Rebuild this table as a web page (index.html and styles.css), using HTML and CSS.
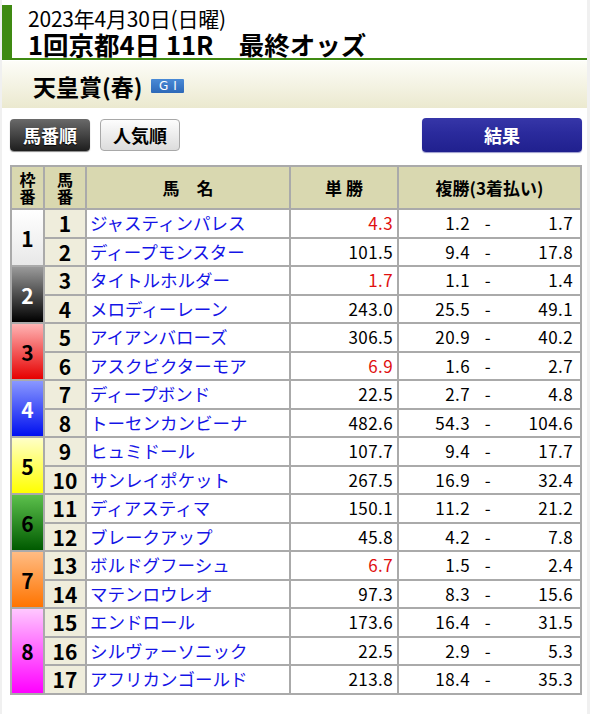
FILE: index.html
```html
<!DOCTYPE html>
<html lang="ja">
<head>
<meta charset="utf-8">
<title>最終オッズ</title>
<link rel="stylesheet" href="styles.css">
</head>
<body>
<div class="page">
  <div class="head">
    <div class="date">2023年4月30日(日曜)</div>
    <div class="race">1回京都4日 11R　最終オッズ</div>
  </div>
  <div class="band">
    <span class="rname">天皇賞(春)</span>
    <span class="grade">GI</span>
  </div>
  <div class="btns">
    <span class="btn dark">馬番順</span>
    <span class="btn light">人気順</span>
    <span class="btn blue">結果</span>
  </div>
  <table class="odds">
    <colgroup>
      <col style="width:33px"><col style="width:42px"><col style="width:204px"><col style="width:108px"><col style="width:183px">
    </colgroup>
    <thead>
      <tr><th class="hs">枠<br>番</th><th class="hs">馬<br>番</th><th>馬　名</th><th>単 勝</th><th>複勝(3着払い)</th></tr>
    </thead>
    <tbody>
      <tr><td rowspan="2" class="w w1">1</td><td class="no">1</td><td class="nm">ジャスティンパレス</td><td class="win red">4.3</td><td class="pl"><div class="plw"><span class="lo">1.2</span><span class="da">-</span><span class="hi">1.7</span></div></td></tr>
      <tr><td class="no">2</td><td class="nm">ディープモンスター</td><td class="win">101.5</td><td class="pl"><div class="plw"><span class="lo">9.4</span><span class="da">-</span><span class="hi">17.8</span></div></td></tr>
      <tr><td rowspan="2" class="w w2">2</td><td class="no">3</td><td class="nm">タイトルホルダー</td><td class="win red">1.7</td><td class="pl"><div class="plw"><span class="lo">1.1</span><span class="da">-</span><span class="hi">1.4</span></div></td></tr>
      <tr><td class="no">4</td><td class="nm">メロディーレーン</td><td class="win">243.0</td><td class="pl"><div class="plw"><span class="lo">25.5</span><span class="da">-</span><span class="hi">49.1</span></div></td></tr>
      <tr><td rowspan="2" class="w w3">3</td><td class="no">5</td><td class="nm">アイアンバローズ</td><td class="win">306.5</td><td class="pl"><div class="plw"><span class="lo">20.9</span><span class="da">-</span><span class="hi">40.2</span></div></td></tr>
      <tr><td class="no">6</td><td class="nm">アスクビクターモア</td><td class="win red">6.9</td><td class="pl"><div class="plw"><span class="lo">1.6</span><span class="da">-</span><span class="hi">2.7</span></div></td></tr>
      <tr><td rowspan="2" class="w w4">4</td><td class="no">7</td><td class="nm">ディープボンド</td><td class="win">22.5</td><td class="pl"><div class="plw"><span class="lo">2.7</span><span class="da">-</span><span class="hi">4.8</span></div></td></tr>
      <tr><td class="no">8</td><td class="nm">トーセンカンビーナ</td><td class="win">482.6</td><td class="pl"><div class="plw"><span class="lo">54.3</span><span class="da">-</span><span class="hi">104.6</span></div></td></tr>
      <tr><td rowspan="2" class="w w5">5</td><td class="no">9</td><td class="nm">ヒュミドール</td><td class="win">107.7</td><td class="pl"><div class="plw"><span class="lo">9.4</span><span class="da">-</span><span class="hi">17.7</span></div></td></tr>
      <tr><td class="no">10</td><td class="nm">サンレイポケット</td><td class="win">267.5</td><td class="pl"><div class="plw"><span class="lo">16.9</span><span class="da">-</span><span class="hi">32.4</span></div></td></tr>
      <tr><td rowspan="2" class="w w6">6</td><td class="no">11</td><td class="nm">ディアスティマ</td><td class="win">150.1</td><td class="pl"><div class="plw"><span class="lo">11.2</span><span class="da">-</span><span class="hi">21.2</span></div></td></tr>
      <tr><td class="no">12</td><td class="nm">ブレークアップ</td><td class="win">45.8</td><td class="pl"><div class="plw"><span class="lo">4.2</span><span class="da">-</span><span class="hi">7.8</span></div></td></tr>
      <tr><td rowspan="2" class="w w7">7</td><td class="no">13</td><td class="nm">ボルドグフーシュ</td><td class="win red">6.7</td><td class="pl"><div class="plw"><span class="lo">1.5</span><span class="da">-</span><span class="hi">2.4</span></div></td></tr>
      <tr><td class="no">14</td><td class="nm">マテンロウレオ</td><td class="win">97.3</td><td class="pl"><div class="plw"><span class="lo">8.3</span><span class="da">-</span><span class="hi">15.6</span></div></td></tr>
      <tr><td rowspan="3" class="w w8">8</td><td class="no">15</td><td class="nm">エンドロール</td><td class="win">173.6</td><td class="pl"><div class="plw"><span class="lo">16.4</span><span class="da">-</span><span class="hi">31.5</span></div></td></tr>
      <tr><td class="no">16</td><td class="nm">シルヴァーソニック</td><td class="win">22.5</td><td class="pl"><div class="plw"><span class="lo">2.9</span><span class="da">-</span><span class="hi">5.3</span></div></td></tr>
      <tr><td class="no">17</td><td class="nm">アフリカンゴールド</td><td class="win">213.8</td><td class="pl"><div class="plw"><span class="lo">18.4</span><span class="da">-</span><span class="hi">35.3</span></div></td></tr>
    </tbody>
  </table>
</div>
</body>
</html>
```
FILE: styles.css
```css
html, body {
  margin: 0;
  padding: 0;
  background: #f0f0f0;
}
body {
  font-family: "Noto Sans CJK JP", "Noto Sans", sans-serif;
  color: #000;
}
.page {
  margin-left: 2px;
  width: 585px;
  min-height: 714px;
  background: #fff;
  padding-top: 5px;
  box-sizing: border-box;
}
.head {
  border-left: 10px solid #3f8a12;
  border-bottom: 2px solid #3f8a12;
  padding-left: 16px;
  height: 53px;
  margin-bottom: 1px;
  box-sizing: content-box;
}
.date {
  font-size: 21px;
  line-height: 24px;
  padding-top: 1px;
  letter-spacing: -0.2px;
}
.race {
  font-size: 25.5px;
  font-weight: bold;
  line-height: 28px;
}
.band {
  height: 47px;
  background: linear-gradient(#fdfdf8, #ebe9cf);
  display: flex;
  align-items: center;
  padding-left: 31px;
  padding-top: 2px;
  box-sizing: border-box;
}
.rname {
  font-size: 23px;
  font-weight: bold;
  line-height: 28px;
}
.grade {
  margin-left: 9px;
  margin-top: 1px;
  width: 33px;
  height: 14px;
  background: linear-gradient(#4a8ad6, #2c68b8);
  border-radius: 1px;
  color: #fff;
  font-family: "DejaVu Sans", sans-serif;
  font-size: 12px;
  line-height: 14px;
  letter-spacing: 5px;
  text-align: center;
  text-indent: 5px;
}
.btns {
  display: flex;
  padding: 11px 0 0 8px;
  height: 45px;
  box-sizing: border-box;
}
.btn {
  height: 32px;
  width: 80px;
  border-radius: 4px;
  font-weight: bold;
  font-size: 18px;
  line-height: 32px;
  text-align: center;
  box-sizing: border-box;
}
.btn.dark {
  background: linear-gradient(#6a6a6a, #1e1e1e);
  color: #fff;
  text-shadow: 0 1px 1px #000;
  box-shadow: 0 1px 1px #888;
}
.btn.light {
  margin-left: 10px;
  background: linear-gradient(#fdfdfd, #dcdcdc);
  border: 1px solid #a8a8a8;
  line-height: 30px;
}
.btn.blue {
  margin-left: auto;
  margin-right: 5px;
  width: 160px;
  height: 34px;
  margin-top: -1px;
  line-height: 34px;
  background: linear-gradient(#3636a8 0%, #2a2a9c 45%, #20208e 100%);
  color: #fff;
  box-shadow: 0 1px 1px #9a9acc;
}
.odds {
  margin: 12px 0 0 8px;
  border-collapse: collapse;
  table-layout: fixed;
  width: 570px;
  border: 2px solid #aaa;
}
.odds th, .odds td {
  border: 2px solid #aaa;
  padding: 0;
}
.odds th {
  background: #d9d8b0;
  font-size: 17px;
  font-weight: bold;
  height: 41px;
  line-height: 22px;
  text-align: center;
}
.odds th.hs {
  font-size: 16px;
  line-height: 17px;
}
.odds td {
  height: 26.5px;
  font-size: 17px;
  line-height: 22px;
}
.odds td.w {
  text-align: center;
  font-weight: bold;
  font-size: 21px;
}
.w1 { background: linear-gradient(#fff, #e8e8e8); }
.w2 { background: linear-gradient(#9a9a9a, #000); color: #fff; }
.w3 { background: linear-gradient(#ffb4b4, #e60000); }
.w4 { background: linear-gradient(#8a98ff, #0010f0); color: #fff; }
.w5 { background: linear-gradient(#ffffc8, #ffff00); }
.w6 { background: linear-gradient(#5cc04c, #005a00); }
.w7 { background: linear-gradient(#ffbc84, #ff7400); }
.w8 { background: linear-gradient(#ffc8ff, #ff00ff); }
.odds td.no {
  background: #efeddc;
  text-align: center;
  font-weight: bold;
  font-size: 21px;
}
.odds td.nm {
  color: #1414e6;
  padding-left: 3px;
  white-space: nowrap;
  font-size: 17.5px;
}
.odds td.win {
  text-align: right;
  padding-right: 4px;
  letter-spacing: 0.4px;
}
.odds td.red { color: #e01010; }
.plw {
  display: flex;
  padding-right: 7px;
  letter-spacing: 0.4px;
}
.lo {
  width: 71px;
  text-align: right;
}
.da {
  width: 36px;
  text-align: center;
}
.hi {
  flex: 1;
  text-align: right;
}
```
